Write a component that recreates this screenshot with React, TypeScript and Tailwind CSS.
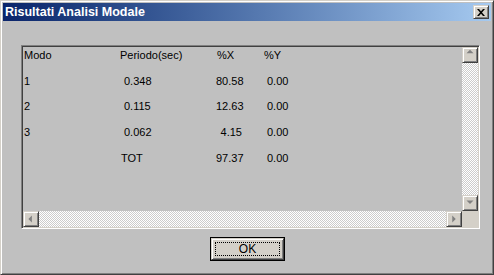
const ROWS = [
  { modo: '1', per: '0.348', x: '80.58', y: '0.00' },
  { modo: '2', per: '0.115', x: '12.63', y: '0.00' },
  { modo: '3', per: '0.062', x: '4.15', y: '0.00' },
  { modo: '', per: 'TOT', x: '97.37', y: '0.00' },
];

const raised =
  'border border-t-[#d4d0c8] border-l-[#d4d0c8] border-r-[#404040] border-b-[#404040] shadow-[inset_1px_1px_#ffffff,inset_-1px_-1px_#808080] bg-[#d4d0c8]';

const dither =
  'bg-[repeating-conic-gradient(#ffffff_0%_25%,#cccccc_0%_50%)] bg-[length:2px_2px]';

function Arrow({ dir }: { dir: 'up' | 'down' | 'left' | 'right' }) {
  const pts = {
    up: '4,6 8,2 12,6',
    down: '4,5 12,5 8,9',
    left: '9,4 9,12 5,8',
    right: '6,4 6,12 10,8',
  }[dir];
  return (
    <svg width="14" height="14" viewBox="0 0 16 16" className="block">
      <polygon points={pts} fill="#808080" />
    </svg>
  );
}

function ScrollBtn({ dir }: { dir: 'up' | 'down' | 'left' | 'right' }) {
  return (
    <div className={`w-[16px] h-[16px] shrink-0 flex items-center justify-center ${raised}`}>
      <Arrow dir={dir} />
    </div>
  );
}

export default function App() {
  return (
    <div
      className="w-[494px] h-[275px] bg-[#c0c0c0] p-[2px] border border-t-[#d4d0c8] border-l-[#d4d0c8] border-r-[#404040] border-b-[#404040] shadow-[inset_1px_1px_#ffffff,inset_-1px_-1px_#808080] overflow-hidden"
      style={{ fontFamily: '"Liberation Sans", Arial, sans-serif' }}
    >
      {/* title bar */}
      <div className="h-[18px] flex items-center justify-between bg-gradient-to-r from-[#0a246a] to-[#a6caf0] pl-[2px] pr-[2px]">
        <span className="text-white font-bold text-[12.5px] leading-none">Risultati Analisi Modale</span>
        <div className={`w-[16px] h-[14px] flex items-center justify-center ${raised}`}>
          <svg width="8" height="7" viewBox="0 0 8 7">
            <path d="M0 0 L2 0 L4 2.2 L6 0 L8 0 L5 3.5 L8 7 L6 7 L4 4.8 L2 7 L0 7 L3 3.5 Z" fill="#000" />
          </svg>
        </div>
      </div>

      {/* list box */}
      <div className="ml-[18px] mt-[24px] w-[459px] h-[184px] border border-t-[#808080] border-l-[#808080] border-r-white border-b-white shadow-[inset_1px_1px_#404040,inset_-1px_-1px_#d4d0c8] p-[1px] flex flex-col">
        <div className="flex flex-1 min-h-0">
          <div className="flex-1 pt-[1px] flex flex-col gap-[11.75px] text-[11px] text-black">
            <div className="flex h-[14px] items-center">
              <span className="w-[97px] pl-[1px]">Modo</span>
              <span className="w-[96px]">Periodo(sec)</span>
              <span className="w-[26px] pl-[1px]">%X</span>
              <span className="pl-[22px]">%Y</span>
            </div>
            {ROWS.map((r) => (
              <div key={r.per} className="flex h-[14px] items-center whitespace-nowrap">
                <span className="w-[97px] pl-[1px]">{r.modo}</span>
                <span className={`w-[96px] ${r.modo ? 'pl-[4px]' : 'pl-[1px]'}`}>{r.per}</span>
                <span className="w-[26px] text-right">{r.x}</span>
                <span className="pl-[25px]">{r.y}</span>
              </div>
            ))}
          </div>
          <div className="w-[16px] flex flex-col">
            <ScrollBtn dir="up" />
            <div className={`flex-1 ${dither}`} />
            <ScrollBtn dir="down" />
          </div>
        </div>
        <div className="flex h-[16px]">
          <ScrollBtn dir="left" />
          <div className={`flex-1 ${dither}`} />
          <ScrollBtn dir="right" />
          <div className="w-[16px] bg-[#d4d0c8]" />
        </div>
      </div>

      {/* OK button */}
      <div className="ml-[207px] mt-[8px] w-[75px] h-[24px] border border-black">
        <div className={`w-full h-full p-[3px] ${raised}`}>
          <div className="w-full h-full border border-dotted border-black flex items-center justify-center text-[12px] text-black leading-none">
            OK
          </div>
        </div>
      </div>
    </div>
  );
}
